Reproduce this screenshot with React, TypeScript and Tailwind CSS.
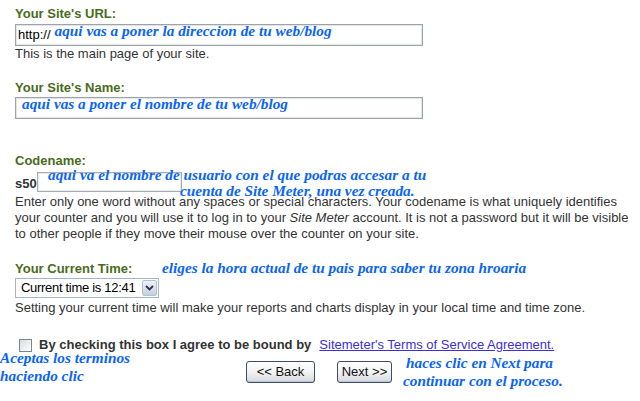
export default function App() {
  const note =
    "font-['Liberation_Serif',serif] italic font-bold text-[15.3px] leading-[16px] text-[#0a64f5] whitespace-nowrap";
  const label = "font-bold text-[#4a6b1e]";
  const btn =
    "flex h-[22px] items-center justify-center rounded-[3px] border border-[#3b4d6e] bg-gradient-to-b from-white via-[#f3f3f3] to-[#d6d8de] text-[13px] text-[#111] shadow-[inset_0_-1px_0_#b9c3d6]";
  return (
    <div className="relative h-[401px] w-[640px] overflow-hidden bg-white font-['Liberation_Sans',Arial,sans-serif] text-[13px] leading-[16px] text-[#333]">
      <div className="pl-[15px] pt-[6px]">
        <div className={label}>Your Site's URL:</div>
        <div className="mt-[2px] flex h-[22px] w-[408px] items-start border border-[#9da3aa] pl-[2px] text-black shadow-[inset_0_0_0_1px_#e2e4e7]">
          <span className="mt-[2px]">http://</span>
          <span className={note + " ml-[4px] mt-[-2px]"}>aqui vas a poner la direccion de tu web/blog</span>
        </div>
        <div>This is the main page of your site.</div>

        <div className={label + " mt-[18px]"}>Your Site's Name:</div>
        <div className="mt-[1px] flex h-[22px] w-[408px] items-start border border-[#9da3aa] pl-[6px] shadow-[inset_0_0_0_1px_#e2e4e7]">
          <span className={note + " mt-[-2px]"}>aqui vas a poner el nombre de tu web/blog</span>
        </div>

        <div className={label + " mt-[34px]"}>Codename:</div>
        <div className="mt-[3px] flex items-end">
          <span className="font-bold text-[#333]">s50</span>
          <div className="h-[20px] w-[145px] border border-[#a6acb3] shadow-[inset_0_0_0_1px_#e6e8ea]" />
        </div>
        <div className="mt-[2px] whitespace-nowrap">
          Enter only one word without any spaces or special characters. Your codename is what uniquely identifies
          <br />
          your counter and you will use it to log in to your <i>Site Meter</i> account. It is not a password but it will be visible
          <br />
          to other people if they move their mouse over the counter on your site.
        </div>

        <div className="mt-[18px] flex items-baseline">
          <span className="w-[147px] font-bold text-[#4a6b1e]">Your Current Time:</span>
          <span className={note}>eliges la hora actual de tu pais para saber tu zona hroaria</span>
        </div>
        <div className="mt-[1px] flex h-[20px] w-[144px] items-center border border-[#a3b3c8] bg-white pl-[5px] text-black">
          <span className="flex-1 tracking-[-0.3px]">Current time is 12:41</span>
          <div className="mr-[1px] flex h-[16px] w-[15px] items-center justify-center rounded-[2px] border border-[#b4c0d4] bg-gradient-to-b from-[#eef1f8] to-[#c6cfe0]">
            <svg width="9" height="6" viewBox="0 0 9 6">
              <path d="M1 1 L4.5 4.5 L8 1" fill="none" stroke="#2a3550" strokeWidth="1.8" />
            </svg>
          </div>
        </div>
        <div className="mt-[2px]">Setting your current time will make your reports and charts display in your local time and time zone.</div>

        <div className="mt-[21px] flex items-center pl-[4px]">
          <div className="h-[13px] w-[13px] border border-[#7c8590] bg-gradient-to-br from-[#d9dbde] to-white" />
          <span className="ml-[7px] font-bold text-[#333]">By checking this box I agree to be bound by</span>
          <span className="ml-[8px] text-[#3a2fd1] underline">Sitemeter's Terms of Service Agreement.</span>
        </div>
      </div>

      <div className="mt-[-4px] flex items-start">
        <div className={note + " w-[246px] leading-[18px]"}>
          Aceptas los terminos
          <br />
          haciendo clic
        </div>
        <div className={btn + " mt-[12px] w-[69px]"}>&lt;&lt; Back</div>
        <div className={btn + " ml-[22px] mt-[12px] w-[55px]"}>Next &gt;&gt;</div>
        <div className={note + " ml-[14px] mt-[5px] leading-[18px]"}>
          haces clic en Next para
          <br />
          <span className="ml-[-3px]">continuar con el proceso.</span>
        </div>
      </div>

      <div className={note + " absolute left-[48px] top-[167px]"}>aqui va el nombre de usuario con el que podras accesar a tu</div>
      <div className={note + " absolute left-[180px] top-[183px]"}>cuenta de Site Meter, una vez creada.</div>
    </div>
  );
}
